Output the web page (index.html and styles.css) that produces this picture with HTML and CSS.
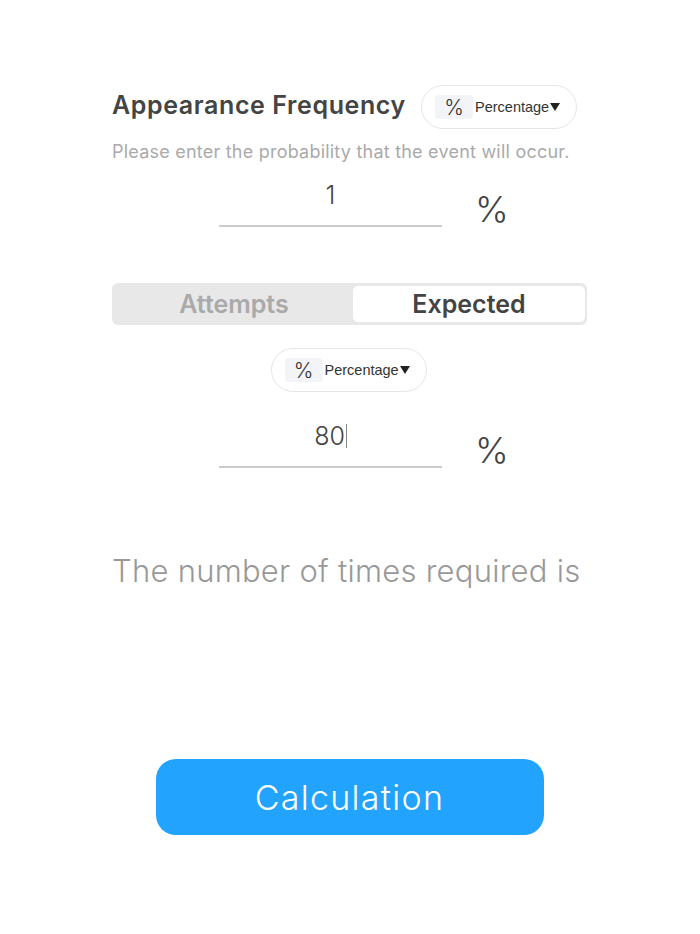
FILE: index.html
```html
<!DOCTYPE html>
<html>
<head>
<meta charset="utf-8">
<link rel="stylesheet" href="styles.css">
</head>
<body>
<main class="page">
  <section class="header">
    <h1 class="title">Appearance Frequency</h1>
    <div class="unit-pill">
      <span class="unit-icon">%</span>
      <span class="unit-label">Percentage</span>
      <span class="caret"></span>
    </div>
  </section>
  <p class="hint">Please enter the probability that the event will occur.</p>
  <div class="input-row">
    <div class="field"><span class="value">1</span></div>
    <span class="suffix">%</span>
  </div>

  <div class="segment">
    <div class="seg-item">Attempts</div>
    <div class="seg-item active">Expected</div>
  </div>

  <div class="pill-row">
    <div class="unit-pill">
      <span class="unit-icon">%</span>
      <span class="unit-label">Percentage</span>
      <span class="caret"></span>
    </div>
  </div>
  <div class="input-row second">
    <div class="field"><span class="value">80<span class="cursor"></span></span></div>
    <span class="suffix">%</span>
  </div>

  <p class="result">The number of times required is</p>

  <div class="btn-row">
    <button class="calc">Calculation</button>
  </div>
</main>
</body>
</html>
```

FILE: styles.css
```css
* { box-sizing: border-box; }
html, body {
  margin: 0;
  padding: 0;
  background: #ffffff;
}
body {
  font-family: Inter, "Noto Sans", sans-serif;
  color: #444444;
}
.page {
  width: 700px;
  padding: 85px 113px 0 112px;
  display: flex;
  flex-direction: column;
}
.header {
  display: flex;
  align-items: center;
  justify-content: space-between;
  height: 44px;
  padding-right: 10px;
}
.title {
  margin: 0;
  font-size: 25px;
  font-weight: 600;
  color: #444444;
  letter-spacing: 0.6px;
  line-height: 30px;
  margin-top: -4px;
}
.unit-pill {
  width: 156px;
  height: 44px;
  border: 1px solid #e6e6e6;
  border-radius: 22px;
  display: flex;
  align-items: center;
  padding-left: 13px;
  background: #fff;
}
.unit-icon {
  width: 38px;
  height: 24px;
  background: #f3f4f8;
  border-radius: 4px;
  display: flex;
  align-items: center;
  justify-content: center;
  font-size: 21px;
  font-weight: 300;
  color: #333;
  line-height: 1;
}
.unit-label {
  font-size: 14.5px;
  color: #333;
  margin-left: 2px;
  font-family: "Liberation Sans", "Noto Sans", sans-serif;
}
.caret {
  width: 0;
  height: 0;
  border-left: 5px solid transparent;
  border-right: 5px solid transparent;
  border-top: 8px solid #222;
  margin-left: 1px;
}
.hint {
  margin: 11px 0 0 0;
  font-size: 18px;
  color: #aaaaaa;
  letter-spacing: 0.22px;
  line-height: 24px;
}
.input-row {
  display: flex;
  align-items: flex-end;
  margin: 18px 0 0 107px;
  height: 45px;
}
.field {
  width: 223px;
  height: 45px;
  border-bottom: 2px solid #cccccc;
  display: flex;
  justify-content: center;
  align-items: flex-start;
}
.value {
  font-size: 25px;
  font-weight: 300;
  line-height: 26px;
  color: #444;
}
.cursor {
  display: inline-block;
  width: 1px;
  height: 24px;
  background: #888;
  vertical-align: -3px;
  margin-left: 1px;
}
.suffix {
  font-size: 36px;
  font-weight: 300;
  line-height: 36px;
  color: #444;
  margin-left: 33px;
}
.segment {
  margin-top: 56px;
  height: 42px;
  background: #e8e8e8;
  border-radius: 6px;
  display: flex;
  padding: 3px 2px 3px 3px;
}
.seg-item {
  display: flex;
  align-items: center;
  justify-content: center;
  font-size: 25px;
  font-weight: 600;
  color: #aaaaaa;
  border-radius: 5px;
  width: 238px;
}
.seg-item.active {
  width: 232px;
  background: #ffffff;
  color: #444444;
}
.pill-row {
  margin-top: 23px;
  display: flex;
  justify-content: center;
  padding-right: 2px;
}
.input-row.second {
  margin-top: 31px;
}
.result {
  margin: 83px 0 0 0;
  font-size: 31px;
  font-weight: 300;
  color: #999999;
  letter-spacing: 0.25px;
  line-height: 40px;
}
.btn-row {
  display: flex;
  justify-content: center;
  margin-top: 168px;
}
.calc {
  width: 388px;
  height: 76px;
  border: none;
  border-radius: 20px;
  background: #21a3fe;
  color: #ffffff;
  font-family: Inter, "Noto Sans", sans-serif;
  font-weight: 300;
  font-size: 34px;
  letter-spacing: 1.3px;
  cursor: pointer;
}
```
